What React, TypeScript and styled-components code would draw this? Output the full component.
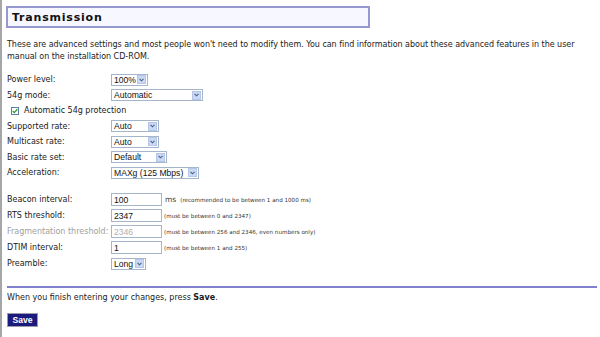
import React from "react";
import styled, { createGlobalStyle } from "styled-components";

const GlobalStyle = createGlobalStyle`
  body {
    margin: 0;
    background: #ffffff;
    font-family: "DejaVu Sans", Verdana, sans-serif;
    color: #1a1a1a;
  }
`;

const Page = styled.div`
  min-height: 337px;
  box-sizing: border-box;
  border-left: 2px solid #a6a6a6;
  padding: 6px 4px 0 5px;
  font-size: 8px;
`;

const TitleBox = styled.div`
  width: 364px;
  height: 22px;
  box-sizing: border-box;
  border: 2px solid #9898d0;
  background: #f7f7ff;
  display: flex;
  align-items: center;
  padding-left: 4px;
  margin-left: -1px;
`;

const Title = styled.h1`
  margin: 0;
  font-size: 11px;
  font-weight: bold;
  letter-spacing: 0.8px;
  color: #111;
`;

const Intro = styled.p`
  margin: 11px 0 9px;
  line-height: 12px;
  width: 575px;
  letter-spacing: -0.03px;
`;

const Row = styled.div<{ $h?: number }>`
  display: flex;
  align-items: center;
  height: ${(p) => p.$h ?? 15.5}px;
`;

const Label = styled.span<{ $disabled?: boolean }>`
  width: 104px;
  flex: none;
  color: ${(p) => (p.$disabled ? "#a0a0a0" : "#1a1a1a")};
`;

const Gap = styled.div`
  height: 11px;
`;

const SelectBox = styled.div<{ $w: number }>`
  width: ${(p) => p.$w}px;
  height: 12px;
  box-sizing: border-box;
  border: 1px solid #a5b6cc;
  background: #fff;
  display: flex;
  align-items: center;
  font-family: "Liberation Sans", Arial, sans-serif;
  font-size: 8.6px;
  color: #111;
  padding-left: 2px;
`;

const SelectText = styled.span`
  flex: 1;
  white-space: nowrap;
`;

const Arrow = styled.span`
  width: 9px;
  height: 9px;
  margin-right: 1px;
  background: #c9d8f4;
  border: 1px solid #b5c6e6;
  box-sizing: border-box;
  display: flex;
  align-items: center;
  justify-content: center;
`;

const TextInput = styled.input`
  width: 51px;
  height: 13px;
  box-sizing: border-box;
  border: 1px solid #a5b6cc;
  padding: 0 2px;
  font-family: "Liberation Sans", Arial, sans-serif;
  font-size: 8.6px;
  color: #111;
  background: #fff;
  &:disabled {
    color: #b0b0b0;
    background: #fff;
  }
`;

const Unit = styled.span`
  margin-left: 3px;
  font-size: 7.5px;
  color: #444;
`;

const Hint = styled.span<{ $first?: boolean }>`
  margin-left: ${(p) => (p.$first ? 2 : 4)}px;
  font-size: 5.6px;
  color: #333;
`;

const CheckRow = styled.div`
  display: flex;
  align-items: center;
  height: 15.5px;
  padding-left: 4px;
  gap: 5px;
`;

const CheckBox = styled.span`
  width: 8px;
  height: 8px;
  box-sizing: border-box;
  border: 1px solid #5c7fa8;
  background: #fff;
  display: flex;
  align-items: center;
  justify-content: center;
`;

const Rule = styled.hr`
  margin: 14px 0 0;
  border: none;
  border-top: 2px solid #8080cc;
  width: 590px;
`;

const Footer = styled.p`
  margin: 4px 0 0;
  line-height: 12px;
`;

const SaveButton = styled.button`
  margin-top: 9px;
  width: 31px;
  height: 14px;
  box-sizing: border-box;
  padding: 0;
  background: #1b1b7e;
  border: 1px solid #9a9aa8;
  color: #fff;
  font-family: "Liberation Sans", Arial, sans-serif;
  font-weight: bold;
  font-size: 8.6px;
`;

const Select = ({ value, w }: { value: string; w: number }) => (
  <SelectBox $w={w}>
    <SelectText>{value}</SelectText>
    <Arrow>
      <svg width="5" height="4" viewBox="0 0 5 4">
        <path d="M0.5 0.8 L2.5 2.8 L4.5 0.8" fill="none" stroke="#4d6185" strokeWidth="1.1" />
      </svg>
    </Arrow>
  </SelectBox>
);

const App = () => (
  <>
    <GlobalStyle />
    <Page>
      <TitleBox>
        <Title>Transmission</Title>
      </TitleBox>
      <Intro>
        These are advanced settings and most people won't need to modify them. You can find information about
        these advanced features in the user manual on the installation CD-ROM.
      </Intro>

      <Row>
        <Label>Power level:</Label>
        <Select value="100%" w={37} />
      </Row>
      <Row>
        <Label>54g mode:</Label>
        <Select value="Automatic" w={92} />
      </Row>
      <CheckRow>
        <CheckBox>
          <svg width="6" height="6" viewBox="0 0 6 6">
            <path d="M0.7 3 L2.3 4.6 L5.3 1.2" fill="none" stroke="#2f9a2f" strokeWidth="1.3" />
          </svg>
        </CheckBox>
        <span>Automatic 54g protection</span>
      </CheckRow>
      <Row>
        <Label>Supported rate:</Label>
        <Select value="Auto" w={48} />
      </Row>
      <Row>
        <Label>Multicast rate:</Label>
        <Select value="Auto" w={48} />
      </Row>
      <Row>
        <Label>Basic rate set:</Label>
        <Select value="Default" w={56} />
      </Row>
      <Row>
        <Label>Acceleration:</Label>
        <Select value="MAXg (125 Mbps)" w={88} />
      </Row>

      <Gap />

      <Row $h={16}>
        <Label>Beacon interval:</Label>
        <TextInput defaultValue="100" />
        <Unit>ms</Unit>
        <Hint>(recommended to be between 1 and 1000 ms)</Hint>
      </Row>
      <Row $h={16}>
        <Label>RTS threshold:</Label>
        <TextInput defaultValue="2347" />
        <Hint $first>(must be between 0 and 2347)</Hint>
      </Row>
      <Row $h={16}>
        <Label $disabled>Fragmentation threshold:</Label>
        <TextInput defaultValue="2346" disabled />
        <Hint $first>(must be between 256 and 2346, even numbers only)</Hint>
      </Row>
      <Row $h={16}>
        <Label>DTIM interval:</Label>
        <TextInput defaultValue="1" />
        <Hint $first>(must be between 1 and 255)</Hint>
      </Row>
      <Row $h={16}>
        <Label>Preamble:</Label>
        <Select value="Long" w={35} />
      </Row>

      <Rule />
      <Footer>
        When you finish entering your changes, press <b>Save</b>.
      </Footer>
      <SaveButton>Save</SaveButton>
    </Page>
  </>
);

export default App;
